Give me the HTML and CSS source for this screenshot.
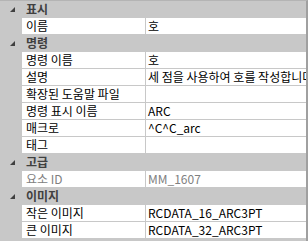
FILE: index.html
```html
<!DOCTYPE html>
<html>

<head>
    <title>속성</title>
    <meta http-equiv="Content-Type" content="text/html;charset=UTF-8">
    <link rel="stylesheet" href="styles.css">
</head>

<body>
    <div class="grid">
        <div class="cat"><span class="toggle"></span><span class="cat-name">표시</span></div>
        <div class="row"><span class="name">이름</span><span class="value">호</span></div>

        <div class="cat"><span class="toggle"></span><span class="cat-name">명령</span></div>
        <div class="row"><span class="name">명령 이름</span><span class="value">호</span></div>
        <div class="row"><span class="name">설명</span><span class="value">세 점을 사용하여 호를 작성합니다</span></div>
        <div class="row"><span class="name">확장된 도움말 파일</span><span class="value"></span></div>
        <div class="row"><span class="name">명령 표시 이름</span><span class="value">ARC</span></div>
        <div class="row"><span class="name">매크로</span><span class="value">^C^C_arc</span></div>
        <div class="row"><span class="name">태그</span><span class="value"></span></div>

        <div class="cat"><span class="toggle"></span><span class="cat-name">고급</span></div>
        <div class="row row--disabled"><span class="name">요소 ID</span><span class="value">MM_1607</span></div>

        <div class="cat"><span class="toggle"></span><span class="cat-name">이미지</span></div>
        <div class="row"><span class="name">작은 이미지</span><span class="value">RCDATA_16_ARC3PT</span></div>
        <div class="row"><span class="name">큰 이미지</span><span class="value">RCDATA_32_ARC3PT</span></div>
    </div>
</body>

</html>
```

FILE: styles.css
```css
* {
    box-sizing: border-box;
}

body {
    margin: 0;
    font-family: "Noto Sans CJK KR", "Noto Sans", sans-serif;
    font-size: 12px;
    color: #000;
}

.grid {
    width: 308px;
    height: 241px;
    overflow: hidden;
    background-color: #c8c8c8;
    border-top: 1px solid #b4b4b4;
    border-right: 2px solid #a0a0a0;
}

.cat,
.row {
    display: flex;
    height: 17px;
    border-bottom: 1px solid #c8c8c8;
    line-height: 16px;
    white-space: nowrap;
}

.cat {
    align-items: center;
}

.toggle {
    width: 26px;
    height: 16px;
    display: flex;
    align-items: center;
    justify-content: center;
    flex-shrink: 0;
}

.toggle::before {
    content: "";
    width: 0;
    height: 0;
    border-left: 5px solid transparent;
    border-bottom: 5px solid #404040;
    margin-left: -2px;
}

.cat-name {
    font-weight: bold;
    color: #404040;
}

.row {
    padding-left: 22px;
}

.name {
    width: 124px;
    flex-shrink: 0;
    padding-left: 4px;
    background-color: #fff;
    border-right: 1px solid #c8c8c8;
    overflow: hidden;
}

.value {
    flex: 1;
    padding-left: 2px;
    background-color: #fff;
    overflow: hidden;
}

.row--disabled .name,
.row--disabled .value {
    color: #808080;
}
```
